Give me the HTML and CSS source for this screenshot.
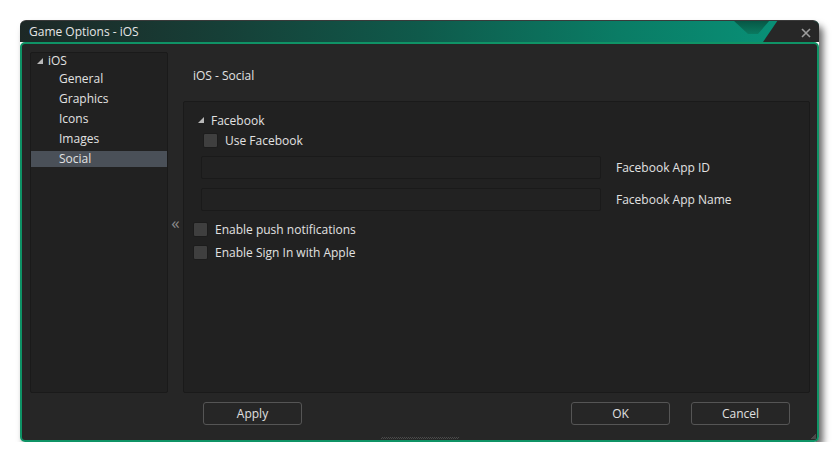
FILE: index.html
```html
<!DOCTYPE html>
<html>
<head>
<meta charset="utf-8">
<link rel="stylesheet" href="styles.css">
</head>
<body>
<div class="window">
  <div class="titlebar">
    <span class="title">Game Options - iOS</span>
    <svg class="title-deco" width="100" height="22" viewBox="0 0 100 22">
      <defs>
        <linearGradient id="notch" x1="0" y1="0" x2="0" y2="1">
          <stop offset="0" stop-color="#075443"/>
          <stop offset="1" stop-color="#0a7a60"/>
        </linearGradient>
      </defs>
      <polygon points="14,0 51,0 39,14 29,14" fill="url(#notch)"/>
      <polygon points="59,0 100,0 100,22 44,22" fill="#272727"/>
      <path d="M83 9 L91 17 M91 9 L83 17" stroke="#9c9c9c" stroke-width="1.6"/>
    </svg>
  </div>
  <div class="frame">
    <div class="main">
      <div class="tree">
        <div class="node-root"><span class="tri"></span><span>iOS</span></div>
        <div class="children">
          <div class="node">General</div>
          <div class="node">Graphics</div>
          <div class="node">Icons</div>
          <div class="node">Images</div>
          <div class="node selected">Social</div>
        </div>
      </div>
      <div class="splitter">«</div>
      <div class="right">
        <div class="heading">iOS - Social</div>
        <div class="panel">
          <div class="section-head"><span class="tri"></span><span>Facebook</span></div>
          <label class="check-row indent"><span class="box"></span><span>Use Facebook</span></label>
          <div class="field-row first">
            <div class="input"></div>
            <span class="field-label">Facebook App ID</span>
          </div>
          <div class="field-row">
            <div class="input"></div>
            <span class="field-label">Facebook App Name</span>
          </div>
          <label class="check-row push"><span class="box"></span><span>Enable push notifications</span></label>
          <label class="check-row apple"><span class="box"></span><span>Enable Sign In with Apple</span></label>
        </div>
      </div>
    </div>
    <div class="buttons">
      <div class="btn apply">Apply</div>
      <div class="spacer"></div>
      <div class="btn">OK</div>
      <div class="btn cancel">Cancel</div>
    </div>
    <div class="grip"></div>
    <div class="corner-grip"></div>
  </div>
</div>
</body>
</html>
```

FILE: styles.css
```css
html, body {
  margin: 0;
  padding: 0;
  background: #ffffff;
}

body {
  font-family: "Open Sans", "DejaVu Sans", sans-serif;
  font-size: 12px;
  color: #e2e2e2;
}

.window {
  margin: 20px 0 0 20px;
  width: 799px;
  border-radius: 6px;
  box-shadow: 4px 6px 7px rgba(0, 0, 0, 0.6);
}

.titlebar {
  position: relative;
  height: 22px;
  box-sizing: border-box;
  border-top: 1px solid #3a3a3a;
  border-radius: 6px 6px 0 0;
  background: linear-gradient(to right, #1d2826 0%, #163f37 25%, #0f5a4b 50%, #0a7c65 75%, #08957b 100%);
  overflow: hidden;
  display: flex;
  align-items: center;
  padding-left: 9px;
}

.title {
  color: #e6e6e6;
  line-height: 20px;
}

.title-deco {
  position: absolute;
  right: 0;
  top: -1px;
}

.frame {
  position: relative;
  height: 400px;
  box-sizing: border-box;
  border: 2px solid #0f9366;
  border-radius: 5px;
  background: #262626;
  padding: 8px 7px 15px 8px;
  display: flex;
  flex-direction: column;
}

.main {
  height: 341px;
  display: flex;
}

.tree {
  width: 138px;
  box-sizing: border-box;
  background: #212121;
  border: 1px solid #1a1a1a;
  border-radius: 2px;
}

.node-root {
  height: 15px;
  display: flex;
  align-items: center;
  padding-left: 6px;
  gap: 5px;
}

.tri {
  width: 0;
  height: 0;
  border-style: solid;
  border-width: 0 0 6px 6px;
  border-color: transparent transparent #b8b8b8 transparent;
}

.children {
  margin-top: 3px;
  display: flex;
  flex-direction: column;
  gap: 4px;
}

.node {
  height: 16px;
  line-height: 15px;
  padding-left: 28px;
}

.node.selected {
  background: #4a5058;
}

.splitter {
  width: 15px;
  display: flex;
  align-items: center;
  justify-content: center;
  color: #8a8a8a;
  font-size: 17px;
  padding-top: 0;
}

.right {
  flex: 1;
  display: flex;
  flex-direction: column;
}

.heading {
  height: 49px;
  box-sizing: border-box;
  padding: 15px 0 0 10px;
  line-height: 18px;
}

.panel {
  flex: 1;
  background: #212121;
  border: 1px solid #1a1a1a;
  border-radius: 2px;
  padding: 10px 0 0 0;
  display: flex;
  flex-direction: column;
}

.section-head {
  height: 16px;
  display: flex;
  align-items: center;
  gap: 7px;
  padding-left: 14px;
}

.check-row {
  display: flex;
  align-items: center;
  gap: 7px;
  height: 16px;
}

.check-row.indent {
  margin-top: 4px;
  padding-left: 19px;
}

.box {
  width: 15px;
  height: 15px;
  box-sizing: border-box;
  background: #3f3f3f;
  border: 1px solid #1c1c1c;
  border-radius: 2px;
}

.field-row {
  display: flex;
  align-items: center;
  padding-left: 17px;
  margin-top: 9px;
  height: 23px;
}

.field-row.first {
  margin-top: 8px;
}

.input {
  width: 400px;
  height: 23px;
  box-sizing: border-box;
  background: #222222;
  border: 1px solid #1a1a1a;
  border-radius: 2px;
}

.field-label {
  margin-left: 15px;
}

.check-row.push {
  margin-top: 10px;
  padding-left: 9px;
}

.check-row.apple {
  margin-top: 7px;
  padding-left: 9px;
}

.buttons {
  margin-top: 9px;
  height: 23px;
  display: flex;
  padding-left: 173px;
  padding-right: 20px;
}

.spacer {
  flex: 1;
}

.btn {
  width: 99px;
  height: 23px;
  box-sizing: border-box;
  border: 1px solid #555555;
  border-radius: 3px;
  background: #262626;
  display: flex;
  align-items: center;
  justify-content: center;
  color: #e0e0e0;
}

.btn.cancel {
  margin-left: 21px;
}

.grip {
  position: absolute;
  left: 359px;
  bottom: 1px;
  width: 78px;
  height: 2px;
  background-image:
    linear-gradient(45deg, #4a4a4a 25%, transparent 25%, transparent 75%, #4a4a4a 75%),
    linear-gradient(45deg, #4a4a4a 25%, transparent 25%, transparent 75%, #4a4a4a 75%);
  background-size: 2px 2px;
  background-position: 0 0, 1px 1px;
}

.corner-grip {
  position: absolute;
  right: 1px;
  bottom: 1px;
  width: 5px;
  height: 5px;
  background: linear-gradient(135deg, transparent 50%, #4a4a4a 50%);
}
```
